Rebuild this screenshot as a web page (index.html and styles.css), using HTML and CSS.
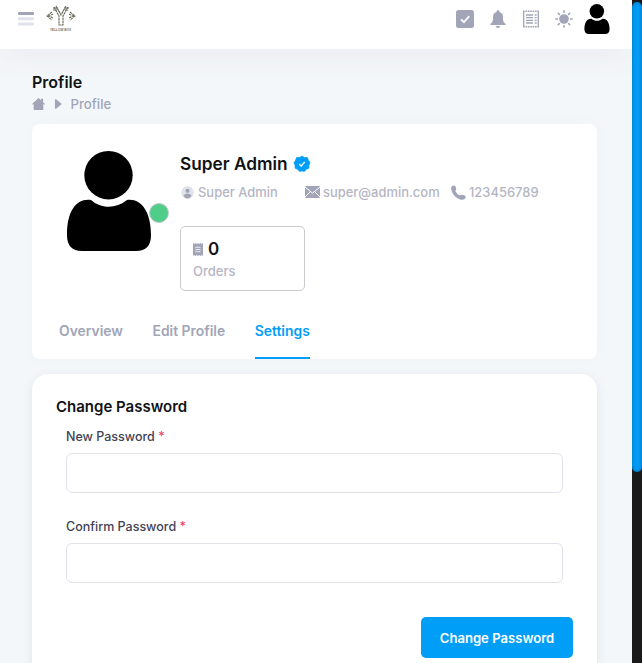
FILE: index.html
```html
<!DOCTYPE html>
<html lang="en">
<head>
<meta charset="utf-8">
<title>Profile</title>
<link rel="stylesheet" href="styles.css">
</head>
<body>
<svg class="defs" aria-hidden="true">
  <symbol id="person" viewBox="0 0 84 100">
    <circle cx="41.5" cy="24.2" r="24.2"/>
    <path d="M24 49C34 58 49 58 60 49C73 47 84 59 84 84Q84 100 69 100H15Q0 100 0 84C0 59 10 47 24 49Z"/>
  </symbol>
</svg>
<div class="app">
  <div class="page">
    <header class="topbar">
      <svg class="menu" viewBox="0 0 16 14"><rect width="16" height="3" rx="1"/><rect class="pale" y="5.3" width="16" height="3" rx="1"/><rect class="pale" y="10.6" width="16" height="3" rx="1"/></svg>
      <svg class="logo" viewBox="0 0 32 28">
        <g fill="none" stroke="#68685a" stroke-width="1.1">
          <path d="M8 2L13 11V20H17V11L22 2M11 3L15 10L19 3M10 1L14 8M20 1L16 8" stroke-dasharray="2.600 .5"/>
          <path d="M6 7L1 11L6 15M7 9L3 11L7 13M24 7L29 11L24 15M23 9L27 11L23 13" stroke-dasharray="2.5 .6"/>
          <path d="M7 3H12M18 3H23M7 5H11M19 5H22"/>
        </g>
        <text x="4" y="26" textLength="21" lengthAdjust="spacingAndGlyphs">YELLOW BOX</text>
      </svg>
      <nav class="tools">
        <svg viewBox="0 0 18 18"><rect width="18" height="18" rx="2.5"/><path class="cut" d="M5 9.3L8 12.2L13.3 6.2" stroke-width="1.8"/></svg>
        <svg viewBox="0 0 18 18"><path d="M7.5 2Q7.5 0 9 0T10.500 2Q14 3 14 7V9.500Q14 12.500 16.600 14V15H1.400V14Q4 12.500 4 9.500V7Q4 3 7.500 2ZM6.800 16H11.200Q11 18 9 18T6.800 16Z"/></svg>
        <svg viewBox="0 0 18 18"><path class="line" d="M1.700 1.500V16.500M16.300 1.500V16.500" stroke-width="1.300"/><path class="line" d="M1 1.300H17M1 16.700H17" stroke-width="1.600" stroke-dasharray="1.700 .7"/><path class="line" d="M4 5H11M4 7.700H11M4 10.400H11M4 13H11M12.700 5H14.700M12.700 7.700H14.700M12.700 10.400H14.700M12.700 13H14.700" stroke-width="1.300"/></svg>
        <svg viewBox="0 0 18 18"><circle cx="9" cy="9" r="4.800"/><path class="line" d="M9 .8V2.500M9 15.500V17.200M.8 9H2.500M15.500 9H17.200M3.200 3.200L4.400 4.400M13.600 13.600L14.800 14.800M3.200 14.800L4.400 13.600M13.600 4.400L14.800 3.200" stroke-width="1.500" stroke-linecap="round"/></svg>
      </nav>
      <svg class="avatar-small"><use href="#person"/></svg>
    </header>
    <main>
      <h1><span>Profile</span></h1>
      <div class="crumbs">
        <svg class="home" viewBox="0 0 13 12"><path d="M6.500 0L9 2.200V.7H11V4L13 6L12.300 6.800L11.300 6V12H1.700V6L.7 6.800L0 6Z"/></svg>
        <svg class="arrow" viewBox="0 0 7 10"><path d="M.8 0L6.800 5L.8 10Q0 10 0 9V1Q0 0 .8 0Z"/></svg>
        <span>Profile</span>
      </div>
      <section class="card profile">
        <div class="summary">
          <div class="photo"><svg><use href="#person"/></svg><i class="online"></i></div>
          <div class="details">
            <div class="name"><span>Super Admin</span>
              <svg viewBox="0 0 18 18"><path class="badge" d="M9 1L11.300 2.600L14.400 2.600L15.400 5.300L17 7.700L16 10L15.800 13.200L13.300 14.300L11.300 16.500L9 15.800L6.700 16.500L4.700 14.300L2.200 13.200L2 10L1 7.700L2.600 5.300L3.600 2.600L6.700 2.600Z"/><path class="cut" d="M6.200 9L8.200 11L11.700 7" stroke-width="1.200"/></svg>
            </div>
            <div class="contacts">
              <span class="role"><svg viewBox="0 0 13 13"><circle cx="6.500" cy="6.500" r="6.300" fill="#e1e3ea"/><circle cx="6.500" cy="4.800" r="2.100"/><path d="M2.400 9.800Q3.800 7.500 6.500 7.500T10.600 9.800Q9 12.500 6.500 12.500T2.400 9.800Z"/></svg><span>Super Admin</span></span>
              <span class="mail"><svg viewBox="0 0 15 12"><rect width="15" height="12" rx="1"/><path class="cut" d="M0 1L7.500 7.200L15 1M0 11L5.500 5.500M15 11L9.500 5.500" stroke-width="1"/></svg><span>super@admin.com</span></span>
              <span class="phone"><svg viewBox="0 0 15 15"><path d="M1 1Q3.500-.5 4.700 1.700L5.200 4Q5.300 5.300 4.300 6Q5.700 9 8.700 10.500Q9.500 9.500 11 9.700L13.300 10.300Q15.500 11.500 14.300 13.300Q12.500 15.500 9 14.500Q2 11.500 .3 5Q-.3 2.500 1 1Z"/></svg><span>123456789</span></span>
            </div>
            <div class="stat">
              <div class="count"><svg viewBox="0 0 10 13"><path d="M0 0L1.200 1L2.500 0L3.700 1L5 0L6.300 1L7.500 0L8.800 1L10 0V13L8.800 12L7.500 13L6.300 12L5 13L3.700 12L2.500 13L1.200 12L0 13Z"/><path class="cut" d="M2.300 4.300H7.500M2.300 6.500H7.500M2.300 8.700H7.500" stroke-width=".8"/></svg><b>0</b></div>
              <div class="caption"><span>Orders</span></div>
            </div>
          </div>
        </div>
        <nav class="tabs"><a>Overview</a><a>Edit Profile</a><a class="active">Settings</a></nav>
      </section>
      <section class="card password">
        <h2><span>Change Password</span></h2>
        <label><span>New Password</span> <em>*</em></label>
        <input type="password">
        <label><span>Confirm Password</span> <em>*</em></label>
        <input type="password">
        <button><span>Change Password</span></button>
      </section>
    </main>
  </div>
  <div class="scroll"><div class="thumb"></div></div>
</div>
</body>
</html>
```
FILE: styles.css
```css
* { box-sizing: border-box; }
body { margin: 0; font-family: Inter, sans-serif; font-size: 13px; color: #181c32; overflow: hidden; }
svg { display: block; flex: none; fill: #a1a5b7; }
.defs { position: absolute; width: 0; height: 0; }
.cut { fill: none; stroke: #fff; }
.line { fill: none; stroke: #a1a5b7; }
h1, h2 { margin: 0; font-weight: 600; color: #111214; }
.app { display: grid; grid-template-columns: 632px 10px; height: 663px; overflow: hidden; }
.page { background: #f4f7fa; overflow: hidden; }
.topbar { display: flex; height: 49px; padding: 3px 22px 0 18px; background: #fff; box-shadow: 0 10px 30px rgba(82, 63, 105, .05); }
.menu { width: 16px; height: 14px; margin-top: 9px; }
.pale { fill: #e1e3ea; }
.logo { width: 32px; height: 28px; margin: 2px 0 0 12px; }
.logo text { font: bold 4px "Liberation Sans", sans-serif; fill: #77736a; }
.tools { display: flex; gap: 15px; margin: 7px 11px 0 auto; }
.tools svg { width: 18px; height: 18px; }
.avatar-small { width: 26px; height: 30px; margin-top: 1px; fill: #000; }
main { padding: 22px 35px 0 32px; }
h1 { font-size: 16px; line-height: 23px; }
.crumbs { display: flex; align-items: center; height: 20px; color: #a1a5b7; font-size: 13.200px; font-weight: 500; }
.home { width: 13px; height: 12px; }
.arrow { width: 7px; height: 10px; margin: 0 8.500px 0 10px; }
.card { background: #fff; box-shadow: 0 0 20px rgba(76, 87, 125, .02); }
.profile { height: 235px; margin-top: 10px; border-radius: 8px; padding: 27px 27px 0; }
.summary { display: flex; height: 164px; }
.photo { position: relative; width: 100px; height: 100px; margin-right: 21px; }
.photo svg { width: 84px; height: 100px; margin-left: 8px; fill: #000; }
.online { position: absolute; left: 90px; top: 52px; width: 20px; height: 20px; border: 1px solid #c4c8cc; border-radius: 50%; background: #50cd89; }
.name { display: flex; align-items: center; gap: 5px; height: 25px; font-size: 17.250px; font-weight: 600; color: #111214; }
.name svg { width: 18px; height: 18px; }
.name .badge { fill: #009ef7; stroke: #009ef7; stroke-width: .8; stroke-linejoin: round; }
.contacts { display: flex; height: 20px; margin-top: 6px; color: #b5b5c3; font-size: 12.950px; font-weight: 500; }
.contacts > span { display: flex; align-items: center; }
.role { width: 125px; gap: 4px; }
.role svg { width: 13px; height: 13px; margin-left: 1px; }
.mail { width: 146px; gap: 3px; }
.mail svg { width: 15px; height: 12px; }
.phone { gap: 3px; }
.phone svg { width: 15px; height: 15px; }
.stat { width: 125px; height: 65px; margin-top: 24px; padding: 10px 12px; border: 1px solid #c9c9cf; border-radius: 5px; }
.count { display: flex; align-items: center; gap: 5px; height: 24px; color: #111214; }
.count svg { width: 10px; height: 13px; }
.count b { font-size: 17px; font-weight: 600; }
.caption { line-height: 21px; color: #b5b5c3; font-weight: 500; }
.tabs { display: flex; gap: 29.500px; height: 44px; }
.tabs a { height: 44px; line-height: 32px; font-weight: 600; font-size: 13.900px; color: #a1a5b7; white-space: nowrap; }
.tabs .active { color: #009ef7; border-bottom: 2px solid #009ef7; }
.password { display: flex; flex-direction: column; height: 320px; margin-top: 15px; padding: 22px 24px; border-radius: 16px; box-shadow: 0 2px 10px rgba(70, 80, 110, .12); }
h2 { font-size: 15px; line-height: 22px; }
label { margin: 8px 10px 6px; height: 21px; line-height: 21px; font-size: 12.500px; font-weight: 500; color: #3f4254; }
em { color: #f1416c; font-style: normal; }
input { height: 40px; margin: 0 10px 15px; border: 1px solid #e1e3ea; border-radius: 6px; background: #fff; }
label + input + label { margin-top: 8px; }
button { align-self: flex-end; width: 152px; height: 41px; margin-top: 19px; border: 0; border-radius: 5px; background: #009ef7; color: #fff; font: 600 13.100px Inter, sans-serif; white-space: nowrap; padding: 0; }
.scroll { background: #1a1a1a; }
.thumb { height: 470px; margin-top: 2px; border-radius: 5px; background: #009ef7; box-shadow: inset 0 0 4px rgba(0, 60, 120, .5); }
```
